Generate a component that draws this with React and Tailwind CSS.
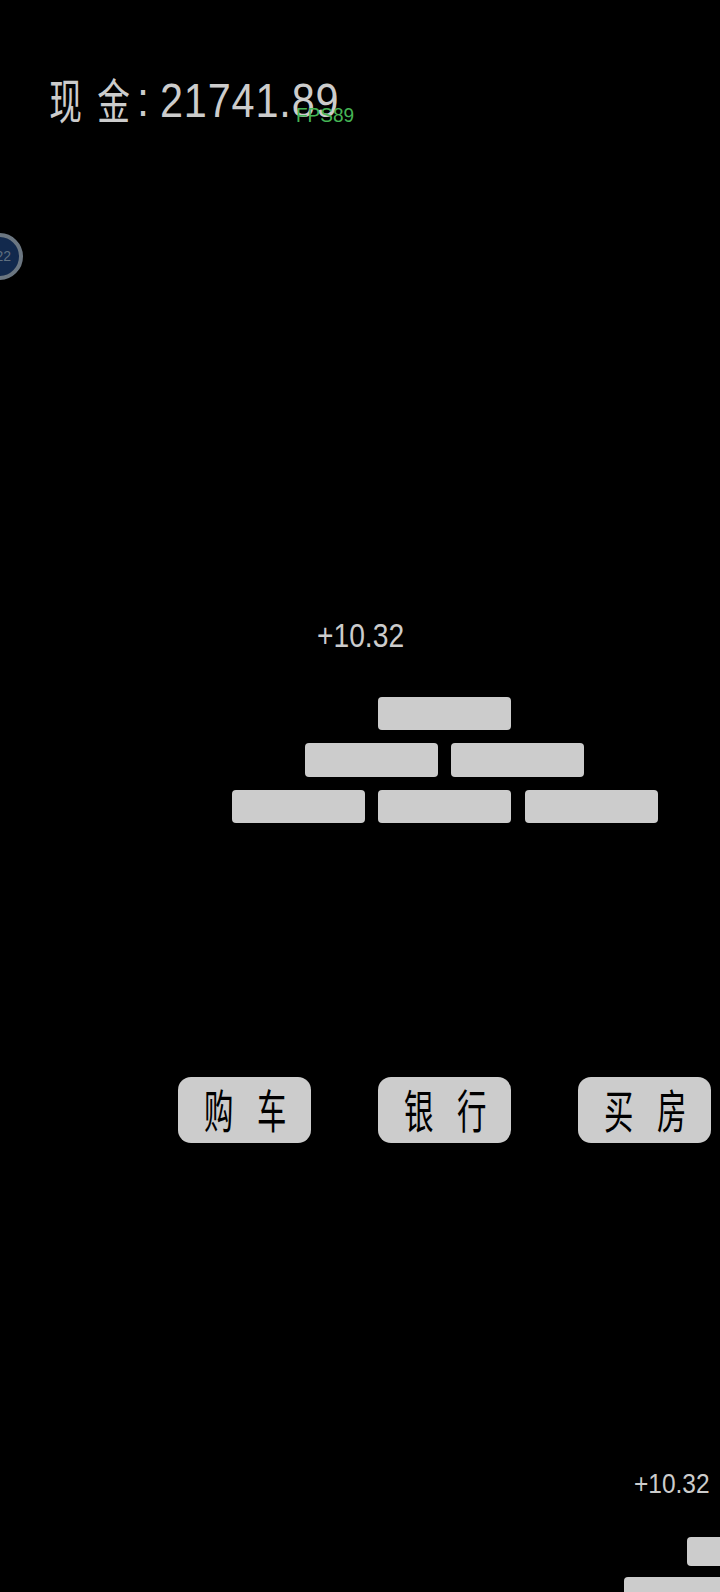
import React from 'react';

const cjk = { fontFamily: '"Noto Sans CJK SC", sans-serif' };

// one brick of the pyramid
const Brick = ({ small }) => (
  <div className={small ? 'w-[113px] h-[29px] shrink-0 rounded-[4px] bg-[#cccccc]' : 'w-[133px] h-[33.5px] shrink-0 rounded-[4px] bg-[#cccccc]'}></div>
);

const ShopButton = ({ label }) => (
  <button className="w-[133px] h-[66px] rounded-[13px] bg-[#cccccc] text-black flex items-center justify-center gap-[9px]">
    {label.map((c) => (
      <span key={c} style={cjk} className="inline-block w-[44px] -mt-[4px] text-center text-[46px] leading-[46px] font-normal scale-x-[0.64]">{c}</span>
    ))}
  </button>
);

const App = () => {
  return (
    <div className="relative w-[720px] h-[1592px] overflow-hidden bg-black font-['Liberation_Sans',sans-serif] text-[#cccccc]">
      {/* Cash */}
      <div className="flex items-center h-[50px] mt-[74px] ml-[42px]">
        <span style={cjk} className="inline-block w-[46px] -mt-[2px] text-center text-[48px] leading-[50px] font-normal scale-x-[0.68]">现</span>
        <span style={cjk} className="inline-block w-[46px] -mt-[2px] ml-[2px] text-center text-[48px] leading-[50px] font-normal scale-x-[0.68]">金</span>
        <span className="inline-block w-[17px] ml-[1px] mt-[1px] text-[48px] leading-[50px] origin-left scale-x-[0.9]">:</span>
        <span className="inline-block ml-[6px] mt-[1px] text-[49px] leading-[50px] tracking-[1px] origin-left scale-x-[0.845]">21741.89</span>
      </div>

      <div className="absolute left-[296px] top-[104px] text-[20px] leading-[23px] text-[#45b555] origin-left scale-x-[0.95]">FPS89</div>

      {/* Sleep badge */}
      <div className="absolute left-[-24px] top-[233px] w-[47px] h-[47px] rounded-full border-[4px] border-[#6b7681] bg-[#12294d] flex items-center justify-end pr-[8px]">
        <span className="text-[14px] font-normal text-[#5f6f80]">22</span>
      </div>

      {/* Bricks */}
      <div className="ml-[317px] mt-[492px] h-[40px] text-[33px] leading-[40px] origin-left scale-x-[0.855]">+10.32</div>
      <div className="mt-[40.5px] flex flex-col gap-[13px]">
        <div className="ml-[378px] flex gap-[13px]">
          <Brick />
        </div>
        <div className="ml-[305px] flex gap-[13px]">
          <Brick />
          <Brick />
        </div>
        <div className="ml-[231.5px] flex gap-[13.5px]">
          <Brick />
          <Brick />
          <Brick />
        </div>
      </div>

      {/* Shop */}
      <div className="ml-[178px] mt-[253.5px] flex gap-[67px]">
        <ShopButton label={['购', '车']} />
        <ShopButton label={['银', '行']} />
        <ShopButton label={['买', '房']} />
      </div>

      {/* Next building */}
      <div className="ml-[634px] mt-[324px] h-[34px] text-[28px] leading-[34px] origin-left scale-x-[0.875]">+10.32</div>
      <div className="mt-[36px] flex flex-col gap-[11px]">
        <div className="ml-[687px] flex gap-[12px]">
          <Brick small />
        </div>
        <div className="ml-[624px] flex gap-[12px]">
          <Brick small />
        </div>
      </div>
    </div>
  );
};

export default App;
